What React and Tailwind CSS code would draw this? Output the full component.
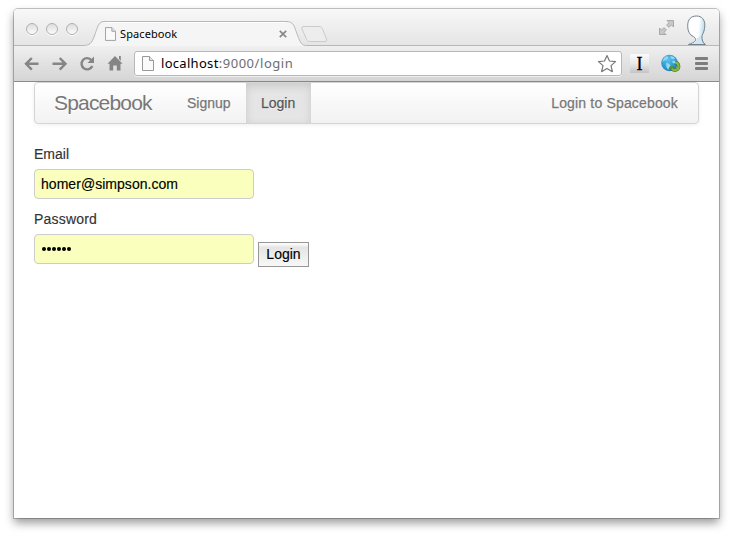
import React from "react";

function PageIcon({ className }) {
  return (
    <svg className={className} width="12" height="15" viewBox="0 0 12 15" fill="#fafafa" stroke="#999">
      <path d="M.5 .5H7.5L11.5 4.5V14.5H.5Z" />
      <path d="M7.5 .5V4.5H11.5" fill="#e4e4e4" />
    </svg>
  );
}

function Light() {
  return <span className="h-3 w-3 rounded-full border border-[#b0b0b0] bg-linear-to-b from-[#dedede] to-[#fbfbfb] shadow-[0_1px_0_#fff]" />;
}

function TitleBar() {
  return (
    <div className="relative flex h-9 items-start rounded-t-[4px] bg-linear-to-b from-[#f8f8f8] to-[#e5e5e5]">
      <svg className="absolute left-0 top-0" width="705" height="37" viewBox="0 0 705 37" fill="none">
        <path d="M71 37C77 36 78 34 80 28C83 18 84 13 90 12.5H273C280 13 281 17 284 26C287 34 288 36.5 293 37Z" fill="#f5f5f5" />
        <path d="M0 36.5H69C76 36.5 77.500 34 80 28C83.500 19 84 12.500 90 12.500H272C280 12.500 280 17 283.500 26C286.500 34 287.500 36.500 293 36.500H705" stroke="#b8b8b8" />
        <path d="M91 13.500H272" stroke="#fff" />
        <path d="M290 17.500H305C307 17.500 308 18.500 309 21L312.500 30C313 32 312.500 32.500 311 32.500H296C294 32.500 293 31.500 292 29L288 20C287.500 18 288 17.500 290 17.500Z" fill="#ededed" stroke="#cbcbcb" />
      </svg>
      <div className="relative ml-3 mt-[14px] flex gap-2">
        <Light />
        <Light />
        <Light />
      </div>
      <div className="relative ml-[27px] mt-[18px] flex w-[182px] items-start">
        <PageIcon className="h-[14px] w-[11px] shrink-0" />
        <span className="ml-1 mt-[-1px] font-['Noto_Sans',sans-serif] text-[11px] leading-4 tracking-[0.1px] text-black">Spacebook</span>
        <svg className="ml-auto mt-[3px]" width="8" height="8" viewBox="0 0 8 8" stroke="#888" strokeWidth="1.700">
          <path d="M.8.8 7.200 7.200M7.200.8.8 7.200" />
        </svg>
      </div>
      <svg className="relative ml-auto mr-3 mt-[11px]" width="15" height="15" viewBox="0 0 15 15" fill="#c8c8c8" stroke="#9c9c9c" strokeWidth=".8">
        <path d="M8 .5H14.500V7L12.400 4.900 10 7.400 7.600 5 10.100 2.600Z" />
        <path d="M.5 8 2.600 10.100 5 7.600 7.400 10 4.900 12.400 7 14.500H.5Z" />
      </svg>
      <svg className="relative mr-[12px] mt-[6px]" width="21" height="30" viewBox="0 0 21 30">
        <defs>
          <linearGradient id="person" x1="0" y1="0" x2="1" y2=".15">
            <stop offset="0" stopColor="#fff" />
            <stop offset=".65" stopColor="#fff" />
            <stop offset="1" stopColor="#b4d8ea" />
          </linearGradient>
        </defs>
        <path d="M2.500 29.500C5 28.500 8.500 27.500 9.500 25.500C10 24 9 22.500 7.500 21.500C3.500 20 1.700 16 1.700 10.500C1.700 4.500 5 1 10.500 1C16 1 19 5 18.800 10.500C18.700 15 17.500 17.500 16 20.500C15.500 25 17 28 19.500 29.500Z" fill="url(#person)" stroke="#71828d" />
        <path d="M10.500 25C10 27 8 28.300 6 29H17C15 26.500 14.500 24 15 21L10.500 23.500Z" fill="#d0e6f0" />
      </svg>
    </div>
  );
}

function Toolbar() {
  return (
    <div className="flex h-[37px] items-start border-b border-[#8b8b8b] bg-linear-to-b from-[#f0f0f0] to-[#d5d5d5]">
      <svg className="ml-[10px] mt-[12px]" width="16" height="14" viewBox="0 0 16 14" fill="none" stroke="#858585" strokeWidth="2.400">
        <path d="M7.800 1 2 6.800 7.800 12.600M2.500 6.800H14.500" />
      </svg>
      <svg className="ml-3 mt-[12px]" width="16" height="14" viewBox="0 0 16 14" fill="none" stroke="#858585" strokeWidth="2.400">
        <path d="M7.700 1 13.500 6.800 7.700 12.600M13 6.800H.5" />
      </svg>
      <svg className="ml-[11px] mt-[11px]" width="16" height="16" viewBox="0 0 16 16">
        <path d="M12.500 4.200A5.600 5.600 0 1 0 13.300 10" fill="none" stroke="#858585" strokeWidth="2.400" />
        <path d="M15 .5V7H8.500Z" fill="#858585" />
      </svg>
      <svg className="ml-[12px] mt-[10px]" width="16" height="17" viewBox="0 0 16 17" fill="#858585">
        <path d="M8 1 15.500 8.800H13.500V15.500H9.800V10.500H6.200V15.500H2.500V8.800H.5ZM12 1H13.800V6L12 4Z" />
      </svg>
      <div className="ml-[11px] mt-[6px] flex h-[25px] w-[488px] items-start rounded-[3px] border border-[#b8b8b8] bg-white shadow-[0_1px_0_#eeeeee]">
        <PageIcon className="ml-[7px] mt-1 shrink-0" />
        <span className="ml-[7px] mt-px whitespace-nowrap font-['Noto_Sans',sans-serif] text-[13px] leading-5 tracking-[0.3px] text-black">
          localhost<span className="tracking-[0.55px] text-[#6e6e6e]">:9000/login</span>
        </span>
        <svg className="ml-auto mr-[4px] mt-[2px]" width="20" height="20" viewBox="0 0 20 20" fill="#fff" stroke="#777" strokeWidth="1.200" strokeLinejoin="round">
          <path d="M10 1.500 12.500 7 18.500 7.600 14 11.600 15.400 17.700 10 14.600 4.600 17.700 6 11.600 1.500 7.600 7.500 7Z" />
        </svg>
      </div>
      <div className="ml-2 mt-[9px] flex h-[19px] w-[19px] items-center justify-center bg-linear-to-b from-[#fbfbfb] via-[#e9e9e9] to-[#c4c4c4] font-['Liberation_Serif',serif] text-[18px] leading-none text-black [-webkit-text-stroke:0.3px_#000]">
        I
      </div>
      <svg className="ml-3 mt-[9px]" width="20" height="19" viewBox="0 0 20 19">
        <defs>
          <radialGradient id="sea" cx=".4" cy=".3" r=".75">
            <stop offset="0" stopColor="#62c0ea" />
            <stop offset=".6" stopColor="#2f9bd2" />
            <stop offset="1" stopColor="#1c75ab" />
          </radialGradient>
        </defs>
        <circle cx="8.500" cy="9" r="8.300" fill="url(#sea)" />
        <path d="M3 4 6 2 7.500 3.500 6 5.500 3.500 6.500 1.500 8ZM9.500 2 13 3 14 5 11.500 5.500 9.500 4ZM5 9 8 9.500 9.500 11.500 8 13.500 7.500 16 5.500 13.500ZM11 7 14.500 6.500 15.500 8.500 12 9.500Z" fill="#8fd8f3" />
        <path d="M14 8.500A3.800 3.800 0 1 1 10.200 13.500" fill="none" stroke="#44752a" strokeWidth="3.400" />
        <path d="M14 8.700A3.700 3.700 0 1 1 10.400 13.500" fill="none" stroke="#8cb83a" strokeWidth="2.200" />
        <path d="M9 12 10.500 15.500 13 12.500Z" fill="#5b8f2d" />
      </svg>
      <div className="ml-[14px] mt-[12px] flex flex-col gap-[2px]">
        <span className="h-[3px] w-[13px] rounded-[1px] bg-[#7d7d7d]" />
        <span className="h-[3px] w-[13px] rounded-[1px] bg-[#7d7d7d]" />
        <span className="h-[3px] w-[13px] rounded-[1px] bg-[#7d7d7d]" />
      </div>
    </div>
  );
}

function Navbar() {
  return (
    <nav className="flex h-[42px] items-stretch rounded-[4px] border border-[#d4d4d4] bg-linear-to-b from-white to-[#f2f2f2] leading-5 text-[#777] shadow-[0_1px_4px_rgba(0,0,0,0.065)] [-webkit-text-stroke:0.25px_currentColor] [text-shadow:0_1px_0_#fff]">
      <a className="w-[137px] pl-[19px] pt-[10px] text-[21px] tracking-[-0.82px] [-webkit-text-stroke:0]">Spacebook</a>
      <a className="w-[74px] pl-[15px] pt-[10px]">Signup</a>
      <a className="w-[65px] bg-[#e5e5e5] pl-[15px] pt-[10px] text-[#555] shadow-[inset_0_3px_8px_rgba(0,0,0,0.125)]">Login</a>
      <span className="ml-auto pr-5 pt-[10px] tracking-[0.17px]">Login to Spacebook</span>
    </nav>
  );
}

function LoginForm() {
  return (
    <form className="mt-5 leading-5 text-[#333] [-webkit-text-stroke:0.15px_currentColor]">
      <label className="block">Email</label>
      <input
        type="text"
        defaultValue="homer@simpson.com"
        className="mt-[5px] block h-[30px] w-[220px] rounded-[4px] border border-[#ccc] bg-[#faffbd] px-[6px] text-[14px] tracking-[0.04px] text-black"
      />
      <label className="mt-[10px] block tracking-[0.2px]">Password</label>
      <div className="flex items-start">
        <div className="mt-[5px] flex h-[30px] w-[220px] items-center gap-px rounded-[4px] border border-[#ccc] bg-[#faffbd] pb-px pl-[6.500px]">
          {[0, 1, 2, 3, 4, 5].map((dot) => (
            <span key={dot} className="h-1 w-1 rounded-full bg-black" />
          ))}
        </div>
        <button type="button" className="ml-1 mt-[13px] flex h-[25px] w-[51px] items-start justify-center border border-[#979797] bg-linear-to-b from-[#fafafa] from-5% via-[#e5e5e5] via-20% to-[#f8f8f8] text-[14px] leading-[22px] text-black">
          Login
        </button>
      </div>
    </form>
  );
}

export default function App() {
  return (
    <div className="h-[538px] w-[733px] overflow-hidden bg-white pl-[14px] pt-[9px] font-['Liberation_Sans',sans-serif] text-[14px]">
      <div className="h-[509px] w-[705px] rounded-t-[4px] bg-white shadow-[0_0_0_1px_rgba(0,0,0,0.22),0_5px_10px_rgba(0,0,0,0.4)]">
        <TitleBar />
        <Toolbar />
        <main className="px-5">
          <Navbar />
          <LoginForm />
        </main>
      </div>
    </div>
  );
}
